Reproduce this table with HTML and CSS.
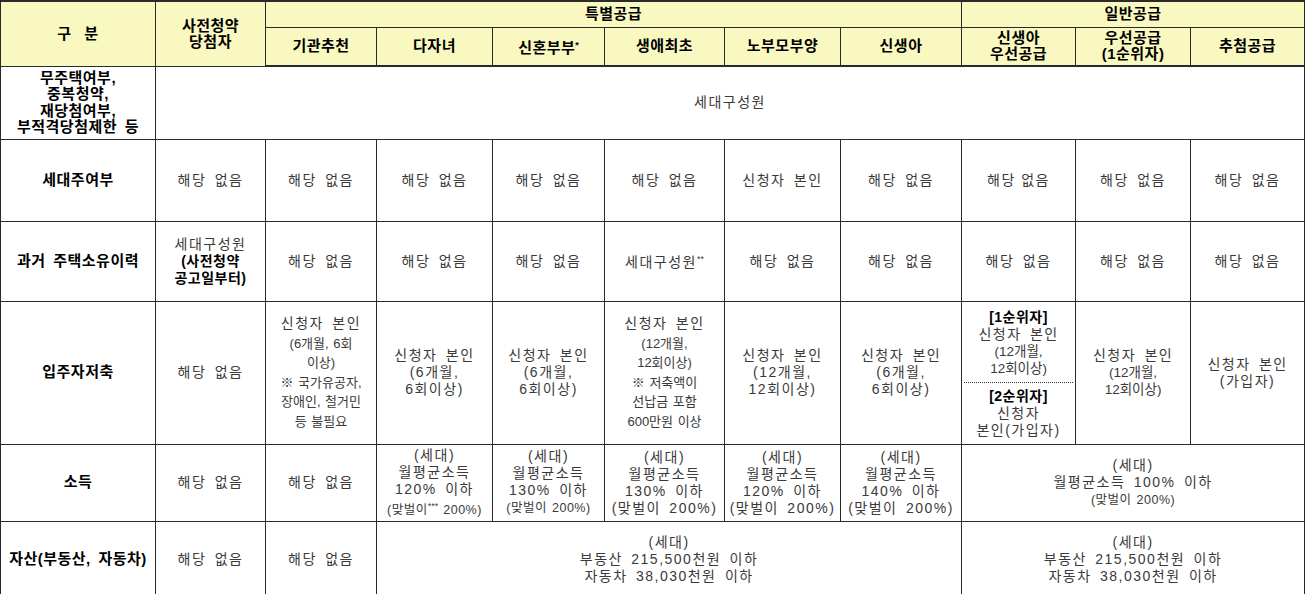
FILE: index.html
```html
<!DOCTYPE html>
<html lang="ko">
<head>
<meta charset="utf-8">
<title>공급유형별 자격요건</title>
<link rel="stylesheet" href="styles.css">
</head>
<body>
<table class="grid">
  <colgroup>
    <col class="w155"><col class="w110"><col class="w111"><col class="w116"><col class="w112"><col class="w120"><col class="w116"><col class="w121"><col class="w114"><col class="w115"><col class="w114">
  </colgroup>
  <thead>
    <tr class="hr1">
      <th class="h" rowspan="2"><span class="wide">구 분</span></th>
      <th class="h" rowspan="2">사전청약<br>당첨자</th>
      <th class="h" colspan="6">특별공급</th>
      <th class="h" colspan="3">일반공급</th>
    </tr>
    <tr class="hr2">
      <th class="h">기관추천</th>
      <th class="h">다자녀</th>
      <th class="h">신혼부부<span class="star">*</span></th>
      <th class="h">생애최초</th>
      <th class="h">노부모부양</th>
      <th class="h">신생아</th>
      <th class="h">신생아<br>우선공급</th>
      <th class="h">우선공급<br>(1순위자)</th>
      <th class="h">추첨공급</th>
    </tr>
  </thead>
  <tbody>
    <tr class="r1">
      <td class="label">무주택여부,<br>중복청약,<br>재당첨여부,<br>부적격당첨제한 등</td>
      <td class="v" colspan="10">세대구성원</td>
    </tr>
    <tr class="r2">
      <td class="label">세대주여부</td>
      <td class="v">해당 없음</td>
      <td class="v">해당 없음</td>
      <td class="v">해당 없음</td>
      <td class="v">해당 없음</td>
      <td class="v">해당 없음</td>
      <td class="v">신청자 본인</td>
      <td class="v">해당 없음</td>
      <td class="v tight">해당 없음</td>
      <td class="v">해당 없음</td>
      <td class="v">해당 없음</td>
    </tr>
    <tr class="r3">
      <td class="label">과거 주택소유이력</td>
      <td class="v">세대구성원<br><b class="em">(사전청약<br>공고일부터)</b></td>
      <td class="v">해당 없음</td>
      <td class="v">해당 없음</td>
      <td class="v">해당 없음</td>
      <td class="v">세대구성원<span class="star">**</span></td>
      <td class="v">해당 없음</td>
      <td class="v">해당 없음</td>
      <td class="v">해당 없음</td>
      <td class="v">해당 없음</td>
      <td class="v">해당 없음</td>
    </tr>
    <tr class="r4">
      <td class="label">입주자저축</td>
      <td class="v">해당 없음</td>
      <td class="v tall">신청자 본인<br><span class="sm">(6개월, 6회<br>이상)<br>※ 국가유공자,<br>장애인, 철거민<br>등 불필요</span></td>
      <td class="v">신청자 본인<br>(6개월,<br>6회이상)</td>
      <td class="v">신청자 본인<br>(6개월,<br>6회이상)</td>
      <td class="v tall">신청자 본인<br><span class="sm">(12개월,<br>12회이상)<br>※ 저축액이<br>선납금 포함<br>600만원 이상</span></td>
      <td class="v">신청자 본인<br>(12개월,<br>12회이상)</td>
      <td class="v">신청자 본인<br>(6개월,<br>6회이상)</td>
      <td class="v split">
        <div class="part first"><b class="em">[1순위자]</b><br>신청자 본인<br><span class="sm">(12개월,<br>12회이상)</span></div>
        <div class="part"><b class="em">[2순위자]</b><br>신청자<br>본인(가입자)</div>
      </td>
      <td class="v">신청자 본인<br><span class="sm">(12개월,<br>12회이상)</span></td>
      <td class="v">신청자 본인<br>(가입자)</td>
    </tr>
    <tr class="r5">
      <td class="label">소득</td>
      <td class="v">해당 없음</td>
      <td class="v">해당 없음</td>
      <td class="v">(세대)<br>월평균소득<br>120% 이하<br><span class="xs">(맞벌이<span class="star">***</span> 200%)</span></td>
      <td class="v">(세대)<br>월평균소득<br>130% 이하<br><span class="xs">(맞벌이 200%)</span></td>
      <td class="v">(세대)<br>월평균소득<br>130% 이하<br>(맞벌이 200%)</td>
      <td class="v">(세대)<br>월평균소득<br>120% 이하<br>(맞벌이 200%)</td>
      <td class="v">(세대)<br>월평균소득<br>140% 이하<br>(맞벌이 200%)</td>
      <td class="v" colspan="3">(세대)<br>월평균소득 100% 이하<br><span class="xs">(맞벌이 200%)</span></td>
    </tr>
    <tr class="r6">
      <td class="label">자산(부동산, 자동차)</td>
      <td class="v">해당 없음</td>
      <td class="v">해당 없음</td>
      <td class="v" colspan="5">(세대)<br>부동산 215,500천원 이하<br>자동차 38,030천원 이하</td>
      <td class="v" colspan="3">(세대)<br>부동산 215,500천원 이하<br>자동차 38,030천원 이하</td>
    </tr>
  </tbody>
</table>
</body>
</html>
```

FILE: styles.css
```css
html, body {
  margin: 0;
  padding: 0;
  background: #ffffff;
}

.grid {
  width: 1305px;
  table-layout: fixed;
  border-collapse: collapse;
  font-family: "Liberation Sans", "Noto Sans CJK KR", sans-serif;
  color: #3a3a3a;
}

.w155 { width: 155px; }
.w110 { width: 110px; }
.w111 { width: 111px; }
.w112 { width: 112px; }
.w114 { width: 114px; }
.w115 { width: 115px; }
.w116 { width: 116px; }
.w120 { width: 120px; }
.w121 { width: 121px; }

.grid th,
.grid td {
  border: 1px solid #2a2a2a;
  text-align: center;
  vertical-align: middle;
  padding: 0 2px;
}

.h {
  background: #f9f8c1;
  color: #000;
  font-weight: bold;
  font-size: 15px;
  line-height: 16px;
  letter-spacing: 0.5px;
}

.wide { word-spacing: 8px; }

.hr1 { height: 26px; }
.hr2 { height: 39px; }
.r1 { height: 73px; }
.r2 { height: 82px; }
.r3 { height: 80px; }
.r4 { height: 140px; }
.r5 { height: 77px; }
.r6 { height: 76px; }

thead .hr2 th { border-bottom-width: 2px; }
thead .hr1 th { border-top-width: 2px; }

.label {
  color: #000;
  font-weight: bold;
  font-size: 15px;
  line-height: 16.5px;
  letter-spacing: 0.5px;
  word-spacing: 3px;
}

.v {
  font-size: 14px;
  line-height: 17px;
  letter-spacing: 1.5px;
  word-spacing: 3px;
}

.tight { word-spacing: 0; }

.em {
  color: #000;
  font-weight: bold;
  letter-spacing: 0.5px;
}

.star {
  font-size: 9px;
  vertical-align: 5px;
  letter-spacing: 0;
}

.sm {
  font-size: 13.5px;
  letter-spacing: 0;
  word-spacing: 1px;
}

.tall {
  line-height: 19.5px;
}

.tall .sm {
  font-size: 13px;
}

.xs {
  font-size: 12.5px;
  letter-spacing: 0.5px;
  word-spacing: 1px;
}

.r5 .xs { font-size: 12.5px; }

.split {
  padding: 0;
}

.part {
  padding: 5px 0;
}

.part.first {
  border-bottom: 1px dotted #333;
  padding: 7px 0 5px;
}
```
